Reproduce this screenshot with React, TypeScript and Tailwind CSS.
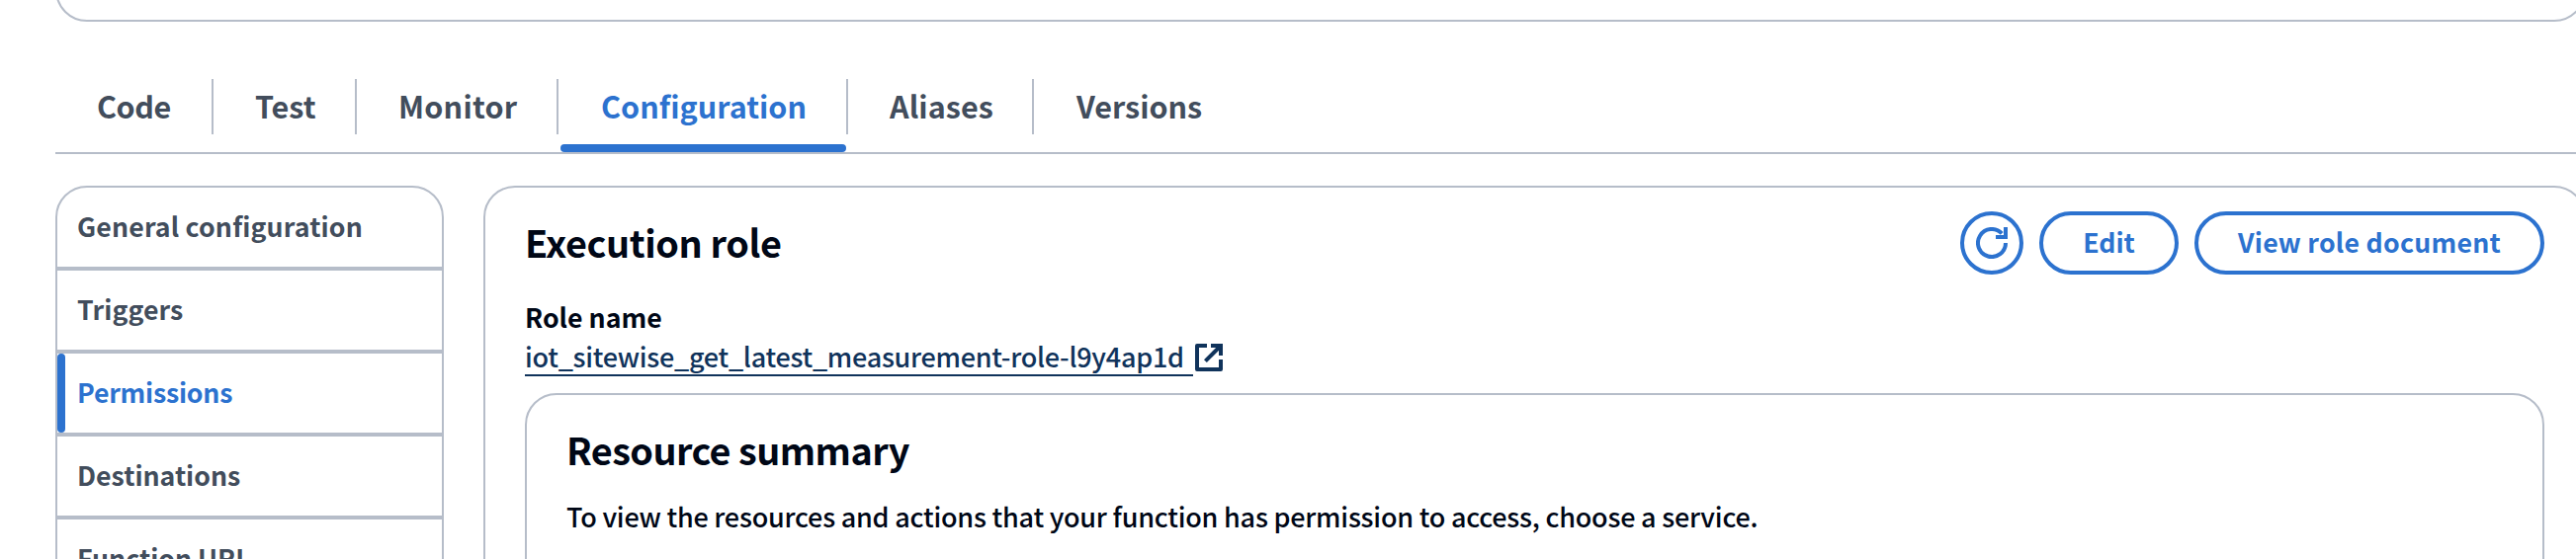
type Tab = { label: string; tracking: string; cell: string; active?: boolean };

const tabs: Tab[] = [
  { label: "Code", tracking: "tracking-[-0.4px]", cell: "w-[160px] pl-[42px]" },
  { label: "Test", tracking: "tracking-normal", cell: "w-[145px] pl-[42px]" },
  { label: "Monitor", tracking: "tracking-[0.25px]", cell: "w-[204px] pl-[42px]" },
  { label: "Configuration", tracking: "tracking-[0.05px]", cell: "w-[293px] pl-[43px]", active: true },
  { label: "Aliases", tracking: "tracking-[0.1px]", cell: "w-[188px] pl-[42px]" },
  { label: "Versions", tracking: "tracking-normal", cell: "w-[220px] pl-[43px]" },
];

const navItems = [
  { label: "General configuration", tracking: "tracking-[0.16px]" },
  { label: "Triggers", tracking: "tracking-[0.1px]" },
  { label: "Permissions", tracking: "tracking-[-0.23px]", active: true },
  { label: "Destinations", tracking: "tracking-normal" },
  { label: "Function URL", tracking: "tracking-normal" },
];

function TabBar() {
  return (
    <div className="mt-[58px] flex h-[76px] w-full border-b-2 border-[#b6bdc9]">
      {tabs.map((tab, i) => (
        <div key={tab.label} className={`relative h-[56px] shrink-0 ${tab.cell} ${i < tabs.length - 1 ? "border-r-2 border-[#b6bdc9]" : ""}`}>
          <span
            className={`block whitespace-nowrap text-[30.5px] leading-[55px] font-bold ${tab.tracking} ${tab.active ? "text-[#2c72cf]" : "text-[#424d5c]"}`}
          >
            {tab.label}
          </span>
          {tab.active && <span className="absolute top-[66px] right-0 left-[2px] h-2 rounded-full bg-[#2c72cf]" />}
        </div>
      ))}
    </div>
  );
}

function SideNav() {
  return (
    <nav className="h-[520px] w-[393px] shrink-0 overflow-hidden rounded-t-[32px] border-2 border-[#b6bdc9]">
      {navItems.map((item) => (
        <div key={item.label} className="relative h-[84px] border-b-4 border-[#b6bdc9] pl-[20px]">
          {item.active && <span className="absolute top-0 left-0 h-[80px] w-2 rounded-full bg-[#2c72cf]" />}
          <span
            className={`block whitespace-nowrap text-[26.7px] leading-[78px] font-bold ${item.tracking} ${item.active ? "text-[#2c72cf]" : "text-[#424d5c]"}`}
          >
            {item.label}
          </span>
        </div>
      ))}
    </nav>
  );
}

function RefreshIcon() {
  return (
    <svg viewBox="0 0 16 16" className="size-8" fill="none" stroke="currentColor" strokeWidth="2">
      <path d="M15 8a7 7 0 1 1-1.9-4.8" />
      <path d="M10 5h5V0" />
    </svg>
  );
}

function ExternalIcon() {
  return (
    <svg viewBox="0 0 16 16" className="size-8" fill="none" stroke="currentColor" strokeWidth="2" strokeLinejoin="round">
      <path d="M7 2H2v12h12V9" />
      <path d="M9 2h5v5" strokeLinejoin="miter" />
      <path d="M14 2 6.2 9.8" />
    </svg>
  );
}

function ExecutionRole() {
  return (
    <section className="ml-[40px] h-[520px] w-[2127px] shrink-0 rounded-t-[32px] border-2 border-[#b6bdc9] px-[40px] pt-[24px] text-[#000716]">
      <header className="flex h-[64px] items-start justify-between">
        <h2 className="text-[37.8px] leading-[62px] font-bold tracking-[-0.4px]">Execution role</h2>
        <div className="flex gap-4 text-[26.7px] leading-[53px] font-bold text-[#2c72cf]">
          <button className="flex size-[64px] items-center justify-center rounded-full border-4 border-[#2c72cf]">
            <RefreshIcon />
          </button>
          <button className="h-[64px] w-[141px] rounded-full border-4 border-[#2c72cf] pb-[3px]">Edit</button>
          <button className="h-[64px] w-[354px] rounded-full border-4 border-[#2c72cf] pb-[3px] tracking-[0.24px]">
            View role document
          </button>
        </div>
      </header>
      <div className="mt-[22px] text-[26.7px] leading-[42px] font-bold">Role name</div>
      <div className="-mt-[2px] flex h-[41px] text-[#10335b]">
        <a className="h-[41px] w-[676px] border-b-2 border-[#10335b] text-[27px] leading-[42px] font-medium tracking-[-0.27px] whitespace-nowrap">
          iot_sitewise_get_latest_measurement-role-l9y4ap1d
        </a>
        <span className="mt-[6px]">
          <ExternalIcon />
        </span>
      </div>
      <div className="mt-[17px] h-[320px] rounded-t-[32px] border-2 border-[#b6bdc9] pt-[26px] pl-[40px]">
        <h3 className="text-[37.8px] leading-[58px] font-bold tracking-[-0.56px]">Resource summary</h3>
        <p className="mt-[19px] text-[27px] leading-10 font-medium tracking-[-0.23px]">
          To view the resources and actions that your function has permission to access, choose a service.
        </p>
      </div>
    </section>
  );
}

export default function App() {
  return (
    <div className="h-[566px] w-full overflow-hidden bg-white pl-[56px] font-['Noto_Sans_CJK_SC','Noto_Sans',sans-serif]">
      <div className="w-[2560px]">
        <div className="h-[22px] overflow-hidden">
          <div className="-mt-[78px] h-[100px] rounded-b-[32px] border-2 border-[#b6bdc9]" />
        </div>
        <TabBar />
        <div className="mt-[32px] flex">
          <SideNav />
          <ExecutionRole />
        </div>
      </div>
    </div>
  );
}
